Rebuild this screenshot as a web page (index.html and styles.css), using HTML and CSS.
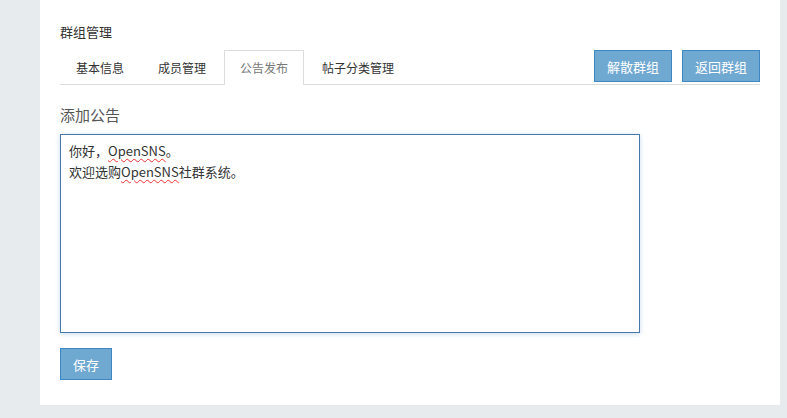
FILE: index.html
```html
<!DOCTYPE html>
<html lang="zh-CN">

<head>
  <meta charset="UTF-8">
  <title>群组管理</title>
  <link rel="stylesheet" href="styles.css">
</head>

<body>
  <div class="panel">
    <h4 class="title">群组管理</h4>
    <div class="tab-bar">
      <ul class="tabs">
        <li class="tab">基本信息</li>
        <li class="tab">成员管理</li>
        <li class="tab active">公告发布</li>
        <li class="tab">帖子分类管理</li>
      </ul>
      <div class="actions">
        <button class="btn">解散群组</button>
        <button class="btn">返回群组</button>
      </div>
    </div>

    <h3 class="section">添加公告</h3>
    <div class="editor" contenteditable="true" spellcheck="false">你好，<span class="typo">OpenSNS</span>。<br>欢迎选购<span class="typo">OpenSNS</span>社群系统。</div>

    <button class="btn save">保存</button>
  </div>
</body>

</html>
```

FILE: styles.css
```css
html,
body {
  margin: 0;
  padding: 0;
  height: 100%;
}

body {
  background: #e8ebee;
  font-family: "Noto Sans CJK SC", "Noto Sans", sans-serif;
  color: #333;
  padding-left: 40px;
  padding-right: 7px;
  box-sizing: border-box;
}

.panel {
  background: #fff;
  padding: 22px 20px 25px;
  height: 405px;
  box-sizing: border-box;
}

.title {
  margin: 0;
  font-size: 13px;
  font-weight: normal;
  line-height: 20px;
  color: #333;
}

.tab-bar {
  display: flex;
  justify-content: space-between;
  margin-top: 8px;
  border-bottom: 1px solid #ddd;
}

.tabs {
  display: flex;
  list-style: none;
  margin: 0;
  padding: 0;
}

.tab {
  font-size: 12px;
  line-height: 34px;
  padding: 0 15px;
  margin-right: 2px;
  margin-bottom: -1px;
  border: 1px solid transparent;
  border-bottom: none;
  color: #333;
}

.tab.active {
  border-color: #ddd;
  background: #fff;
  color: #777;
}

.actions {
  display: flex;
  gap: 10px;
  align-self: flex-start;
}

.btn {
  font-family: inherit;
  font-size: 13px;
  color: #fff;
  background: #6fa8d1;
  border: 1px solid #3f87c2;
  border-radius: 0;
  width: 78px;
  height: 32px;
  padding: 0;
}

.section {
  margin: 19px 0 8px;
  font-size: 15px;
  font-weight: normal;
  line-height: 22px;
  color: #555;
}

.editor {
  width: 580px;
  height: 199px;
  box-sizing: border-box;
  border: 1px solid #4679aa;
  box-shadow: 0 1px 5px rgba(102, 150, 200, 0.35);
  padding: 5px 8px;
  font-size: 13px;
  line-height: 21px;
  color: #333;
  outline: none;
}

.typo {
  text-decoration: underline wavy #e33;
  text-decoration-thickness: 1px;
  text-underline-offset: 2px;
}

.save {
  display: block;
  margin-top: 15px;
  width: 52px;
}
```
